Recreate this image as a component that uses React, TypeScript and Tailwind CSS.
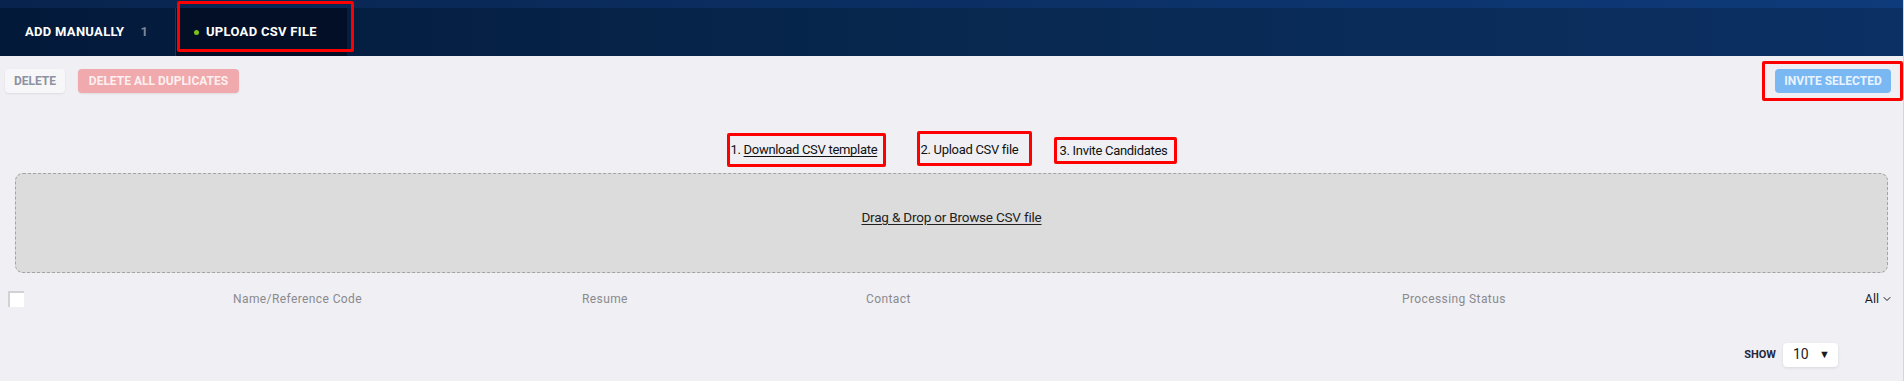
import { ChevronDown } from 'lucide-react'

const font = { fontFamily: 'Roboto, "Liberation Sans", sans-serif' }

const columns = [
  { label: 'Name/Reference Code', cls: 'w-[349px]' },
  { label: 'Resume', cls: 'w-[284px]' },
  { label: 'Contact', cls: 'w-[536px]' },
  { label: 'Processing Status', cls: 'flex-1' },
]

export default function App() {
  return (
    <div className="relative min-h-[381px] bg-[#efeff4] border-r border-[#d4d4dc]" style={font}>
      {/* Header tabs */}
      <div className="h-2 bg-gradient-to-r from-[#08244e] to-[#0e3b7b]" />
      <div className="relative flex h-12 bg-gradient-to-r from-[#03193a] via-[#08284f] to-[#0c3064]">
        <div className="flex w-[175px] items-center pl-[25px]">
          <span className="text-[13px] font-bold tracking-[0.3px] text-white">ADD MANUALLY</span>
          <span className="ml-4 text-[13px] font-bold text-[#7d8797]">1</span>
        </div>
        <div className="w-px bg-[#25344a]" />
        <div className="flex w-[171px] items-center bg-[#020f26] pl-[18px]">
          <span className="h-[5px] w-[5px] rounded-full bg-[#7cc21f]" />
          <span className="ml-[7px] text-[13px] font-bold tracking-[0.3px] text-white">UPLOAD CSV FILE</span>
        </div>
        {/* annotation */}
        <div className="absolute left-[177px] top-[-7px] h-[51px] w-[177px] rounded-[2px] border-[3px] border-[#ff0000]" />
      </div>

      {/* Toolbar */}
      <div className="relative flex items-center px-[5px] pt-[13px]">
        <button className="h-6 w-[60px] rounded-[4px] bg-[#f7f7fa] text-[12px] font-bold text-[#8d91a0] shadow-[0_1px_2px_rgba(0,0,0,0.08)]">
          DELETE
        </button>
        <button className="ml-[13px] h-6 w-[161px] whitespace-nowrap rounded-[4px] bg-[#f0a9ac] text-[12px] font-bold text-[#fdf0f0] shadow-[0_1px_2px_rgba(0,0,0,0.08)]">
          DELETE ALL DUPLICATES
        </button>
        <button className="ml-auto mr-[7px] h-6 w-[116px] whitespace-nowrap rounded-[4px] bg-[#7ab8f4] text-[12px] font-bold text-[#eaf4fe]">
          INVITE SELECTED
        </button>
        <div className="absolute right-0 top-[5px] h-[40px] w-[141px] rounded-[2px] border-[3px] border-[#ff0000]" />
      </div>

      {/* Steps */}
      <div className="mt-[38px] flex justify-center whitespace-nowrap text-[13px] tracking-[-0.3px] text-[#111]">
        <div className="mt-[2px] flex h-[34px] w-[159px] items-center rounded-[2px] border-[3px] border-[#ff0000] pl-[1px]">
          <span>1. <span className="underline underline-offset-2">Download CSV template</span></span>
        </div>
        <div className="ml-[31px] flex h-[35px] w-[115px] items-center rounded-[2px] border-[3px] border-[#ff0000] pl-[1px] pt-[2px]">
          2. Upload CSV file
        </div>
        <div className="ml-[22px] mt-[6px] flex h-[27px] w-[123px] items-center rounded-[2px] border-[3px] border-[#ff0000] pl-[3px]">
          3. Invite Candidates
        </div>
      </div>

      {/* Drop zone */}
      <div className="mx-[15px] mt-[6px] flex h-[100px] items-center justify-center rounded-[8px] border border-dashed border-[#a3a3a3] bg-[#dcdcdc] pb-[12px]">
        <span className="text-[13.5px] tracking-[-0.2px] text-[#222] underline underline-offset-2">Drag &amp; Drop or Browse CSV file</span>
      </div>

      {/* Table header */}
      <div className="mt-[17px] flex items-center pl-[8px] pr-[10px]">
        <div className="h-4 w-4 border-l-2 border-t-2 border-[#d2d2d6] bg-white" />
        <div className="ml-[209px] flex flex-1 items-center text-[12px] tracking-[0.4px] text-[#8a8a8e]">
          {columns.map((c) => (
            <div key={c.label} className={c.cls}>
              {c.label}
            </div>
          ))}
          <div className="flex items-center text-[12.5px] tracking-normal text-[#1b1b1f]">
            All
            <ChevronDown className="ml-[2px] h-3 w-3" strokeWidth={2} />
          </div>
        </div>
      </div>

      {/* Pagination */}
      <div className="mt-[34px] flex items-center justify-end pr-[65px]">
        <span className="text-[11px] font-bold text-[#1f2740]">SHOW</span>
        <div className="ml-[7px] flex h-6 w-[55px] items-center justify-between rounded-[4px] bg-white pl-[10px] pr-[8px] shadow-[0_1px_3px_rgba(0,0,0,0.1)]">
          <span className="text-[14px] text-[#1b1b1f]">10</span>
          <span className="text-[11px] text-[#1b1b1f]">▼</span>
        </div>
      </div>
    </div>
  )
}
